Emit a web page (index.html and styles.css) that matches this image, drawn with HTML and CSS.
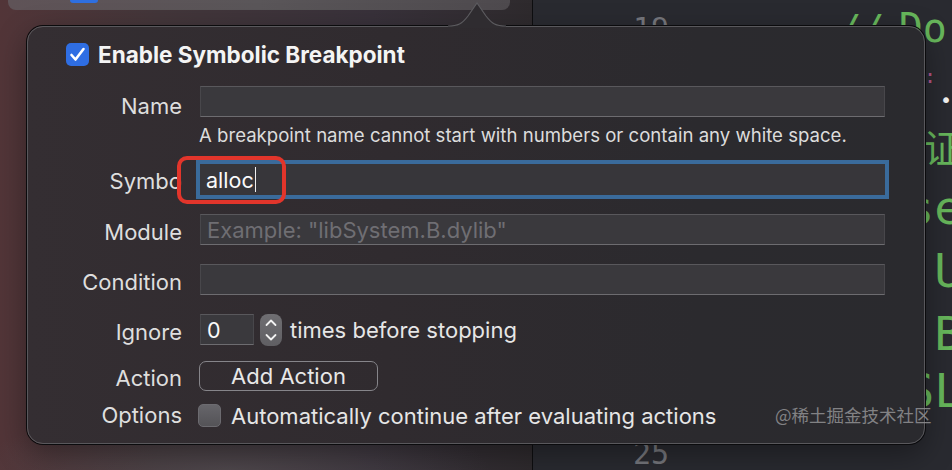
FILE: index.html
```html
<!DOCTYPE html>
<html lang="en">
<head>
<meta charset="UTF-8" />
<meta name="viewport" content="width=device-width, initial-scale=1.0" />
<title>Symbolic Breakpoint</title>
<link rel="stylesheet" href="styles.css">
</head>
<body>
  <div id="screen">
    <div class="desktop">
      <div class="top-panel"><span class="top-check"></span></div>
    </div>
    <div class="editor">
      <div class="line l1"><span class="num">19</span><span class="code slash">//</span><span class="code do">Do</span></div>
      <div class="line l2"><span class="code colon">:</span><span class="code bullet">•</span></div>
      <div class="line l3"><span class="code cjk">证</span></div>
      <div class="line l4"><span class="code edge">se</span></div>
      <div class="line l5"><span class="code edge"><i>:</i>U</span></div>
      <div class="line l6"><span class="code edge"><i>:</i>B</span></div>
      <div class="line l7"><span class="code edge">SL</span></div>
      <div class="line l8"><span class="num">25</span></div>
    </div>

    <!-- Popover -->
    <div class="popover">
      <svg class="arrow" width="58" height="27" viewBox="0 0 58 27">
        <path d="M0 25 C10 25 14 23 20 15 L29 2 L38 15 C44 23 48 25 58 25 L58 27 L0 27 Z" fill="#2f2c30"/>
        <path d="M0 25 C10 25 14 23 20 15 L29 2 L38 15 C44 23 48 25 58 25" fill="none" stroke="#5c5b5f" stroke-width="1.2"/>
      </svg>

      <div class="header">
        <span class="checkbox on">
          <svg width="23" height="23" viewBox="0 0 23 23"><path d="M5.5 12 L9.5 16.5 L17.5 6" fill="none" stroke="#fff" stroke-width="2.6" stroke-linecap="round" stroke-linejoin="round"/></svg>
        </span>
        <span class="title">Enable Symbolic Breakpoint</span>
      </div>

      <div class="row r-name">
        <label>Name</label>
        <div class="field"></div>
      </div>
      <div class="hint">A breakpoint name cannot start with numbers or contain any white space.</div>

      <div class="row r-symbol">
        <label>Symbo</label>
        <div class="field focused"><span class="value">alloc</span><span class="caret"></span></div>
      </div>

      <div class="row r-module">
        <label>Module</label>
        <div class="field"><span class="placeholder">Example: "libSystem.B.dylib"</span></div>
      </div>

      <div class="row r-condition">
        <label>Condition</label>
        <div class="field"></div>
      </div>

      <div class="row r-ignore">
        <label>Ignore</label>
        <div class="inline">
          <div class="field small"><span class="value">0</span></div>
          <div class="stepper">
            <svg width="22" height="32" viewBox="0 0 22 32">
              <path d="M6.5 11 L11 6.5 L15.5 11" fill="none" stroke="#f2f2f2" stroke-width="1.8" stroke-linecap="round" stroke-linejoin="round"/>
              <path d="M6.5 21 L11 25.5 L15.5 21" fill="none" stroke="#f2f2f2" stroke-width="1.8" stroke-linecap="round" stroke-linejoin="round"/>
            </svg>
          </div>
          <span class="text">times before stopping</span>
        </div>
      </div>

      <div class="row r-action">
        <label>Action</label>
        <div class="inline"><button class="btn">Add Action</button></div>
      </div>

      <div class="row r-options">
        <label>Options</label>
        <div class="inline">
          <span class="checkbox off"></span>
          <span class="text">Automatically continue after evaluating actions</span>
        </div>
      </div>

      <div class="highlight"></div>
    </div>

    <div class="watermark">@稀土掘金技术社区</div>
  </div>
</body>
</html>
```

FILE: styles.css
```css
* { box-sizing: border-box; }
body {
  margin: 0;
  background: #2a2b30;
  font-family: Inter, "Noto Sans", sans-serif;
  overflow: hidden;
}
#screen {
  width: 952px;
  height: 470px;
  display: flex;
  position: relative;
  overflow: hidden;
}

/* Left: blurred desktop behind the popover */
.desktop {
  width: 533px;
  flex: none;
  border-right: 1px solid #0e0e10;
  background:
    radial-gradient(ellipse 260px 60px at 230px 470px, rgba(90,86,90,0.55), transparent),
    linear-gradient(90deg, #523538 0%, #43363a 30%, #38313a 70%, #2e2a2d 100%);
}
.top-panel {
  margin: 0 22px 0 8px;
  height: 10px;
  border-radius: 0 0 8px 8px;
  background: linear-gradient(90deg, #5f5357, #5a5659 50%, #4e4a4e);
  padding-left: 62px;
}
.top-check {
  display: block;
  width: 28px;
  height: 3px;
  background: #2e6fe0;
  border-radius: 0 0 4px 4px;
}

/* Right: code editor */
.editor {
  flex: 1;
  background: #292a30;
  font-family: "DejaVu Sans Mono", monospace;
  font-size: 30px;
  color: #67b65b;
  overflow: hidden;
}
.line { display: flex; align-items: center; white-space: nowrap; }
.l1 { height: 56px; }
.l2 { height: 58px; align-items: flex-start; }
.l3 { height: 62px; }
.l4 { height: 62px; }
.l5 { height: 64px; }
.l6 { height: 62px; }
.l7 { height: 52px; }
.l8 { height: 74px; }
.num {
  width: 136px;
  flex: none;
  text-align: right;
  color: #75767c;
}
.slash { margin-left: 170px; font-size: 38px; font-style: italic; }
.do { margin-left: 14px; font-size: 40px; }
.colon { margin-left: 391px; margin-top: 8px; font-size: 20px; color: #b2558a; }
.bullet { margin-left: 4px; margin-top: 32px; font-size: 20px; color: #f2f2f2; }
.cjk { margin-left: 391px; font-family: "Noto Sans CJK SC", sans-serif; font-size: 38px; }
.edge { margin-left: 373px; font-size: 47px; }
.edge i { font-style: normal; color: #8c8d92; }

/* Popover */
.popover {
  position: absolute;
  left: 27px;
  top: 26px;
  width: 898px;
  height: 418px;
  border: 1px solid #59585c;
  border-radius: 16px;
  box-shadow: 0 0 0 1px #0b0b0d, 0 10px 30px rgba(0,0,0,0.35);
  background: linear-gradient(90deg, #342e32 0%, #302b2f 40%, #2b2a2e 75%, #2a2a2e 100%);
  color: #e2e2e2;
  padding: 15px 39px 0 0;
  font-size: 22px;
}
.arrow {
  position: absolute;
  left: 420px;
  top: -26px;
}
.header {
  display: flex;
  align-items: center;
  gap: 9px;
  height: 24px;
  padding-left: 38px;
}
.title { font-weight: 700; font-size: 22.5px; color: #f4f4f4; }
.checkbox {
  width: 23px;
  height: 23px;
  border-radius: 5px;
  flex: none;
}
.checkbox svg { display: block; }
.checkbox.on { background: #2f6ee3; }
.checkbox.off {
  background: linear-gradient(#66656a, #545357);
  border: 1px solid #6c6b70;
}

.row {
  display: grid;
  grid-template-columns: 154px 1fr;
  grid-template-rows: 100%;
  column-gap: 18px;
  align-items: center;
  height: 31px;
}
.row label {
  text-align: right;
  line-height: 22px;
  padding-top: 4px;
  color: #dedede;
}
.r-name { margin-top: 20px; }
.r-name label { padding-top: 8px; }
.r-symbol { margin-top: 19px; }
.r-symbol label { padding-top: 2px; }
.r-module { margin-top: 19px; }
.r-condition { margin-top: 19px; }
.r-ignore { margin-top: 19px; }
.r-action { margin-top: 16px; height: 30px; }
.r-options { margin-top: 13px; height: 23px; }
.r-options label { padding-top: 0; margin-top: -2px; }

.field {
  height: 31px;
  background: #3a393d;
  border: 1px solid #48474b;
  border-top-color: #59585c;
  border-bottom-color: #6d6c70;
  display: flex;
  align-items: center;
  padding-left: 6px;
  font-size: 22px;
}
.field.focused {
  background: #37363a;
  border-color: #37363a;
  box-shadow: 0 0 0 4px #3a6b9b;
  padding-left: 5px;
}
.field.small { width: 54px; }
.value { color: #fafafa; font-size: 21.5px; }
.caret {
  width: 1.5px;
  height: 25px;
  background: #f0f0f0;
  margin-left: 1px;
}
.placeholder { color: #6f6e73; }

.hint {
  margin-top: 8px;
  padding-left: 171px;
  font-size: 18.6px;
  line-height: 20px;
  color: #dcdcdc;
}

.inline {
  display: flex;
  align-items: center;
}
.stepper {
  width: 22px;
  height: 32px;
  border-radius: 8px;
  background: linear-gradient(#6f6e72, #605f63);
  margin-left: 6px;
}
.stepper svg { display: block; }
.inline .text { margin-left: 8px; color: #e6e6e6; }
.r-options .inline { margin-left: -2px; }
.r-options .text { margin-left: 10px; }

.btn {
  width: 179px;
  height: 30px;
  margin-left: -1px;
  background: transparent;
  border: 1.5px solid #86858a;
  border-radius: 7px;
  color: #e8e8e8;
  font-family: Inter, "Noto Sans", sans-serif;
  font-size: 22px;
  padding: 0;
}

/* Red annotation box over the symbol field */
.highlight {
  position: absolute;
  left: 149px;
  top: 129px;
  width: 109px;
  height: 48px;
  border: 4px solid #e2352b;
  border-radius: 10px;
}

.watermark {
  position: absolute;
  left: 775px;
  top: 402px;
  font-family: "Noto Sans CJK SC", sans-serif;
  font-size: 17.5px;
  color: #8c8c8e;
  opacity: 0.9;
}
```
